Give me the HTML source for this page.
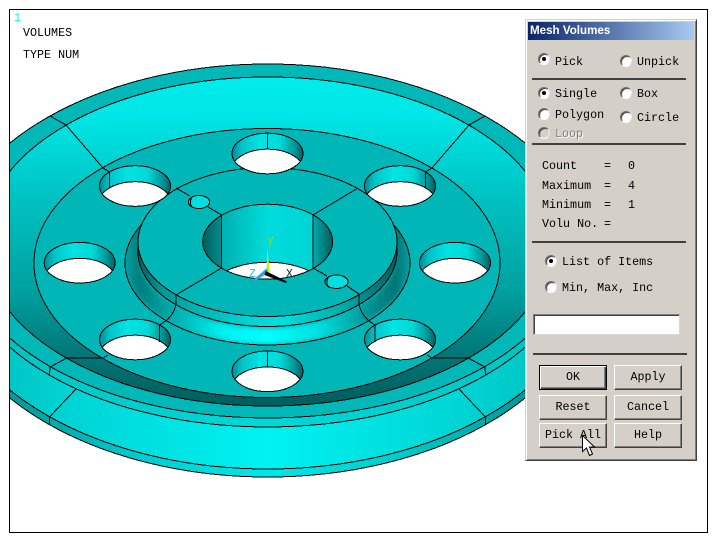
<!DOCTYPE html>
<html><head><meta charset="utf-8">
<style>
html,body{margin:0;padding:0;background:#fff;width:720px;height:546px;overflow:hidden}
#wrap{position:relative;width:720px;height:546px;overflow:hidden;background:#fff}
svg{position:absolute;left:0;top:0}
.t{position:absolute;font:11.7px/14px "Liberation Mono",monospace;color:#000;white-space:pre}
#panel{position:absolute;left:525px;top:19px;width:172px;height:442px;box-sizing:border-box;background:#d4d0c8;border:1px solid;border-color:#d4d0c8 #404040 #404040 #d4d0c8;box-shadow:inset 1px 1px #fff,inset -1px -1px #808080}
#title{position:absolute;left:528px;top:22px;width:166px;height:18px;background:linear-gradient(90deg,#0a246a,#a6caf0);color:#fff;font:bold 11.6px/18px "Liberation Sans",sans-serif;text-indent:2px}
.d{position:absolute;height:2px;background:#404040}
.r{position:absolute;width:12px;height:12px;box-sizing:border-box;border-radius:50%;background:#fff;border:1px solid;border-color:#707070 #e8e8e8 #fff #707070;box-shadow:inset 1px 1px #404040}
.r.s:after{content:"";position:absolute;left:3px;top:3px;width:4px;height:4px;border-radius:50%;background:#000}
.b{position:absolute;box-sizing:border-box;width:68px;height:25px;background:#d4d0c8;border:1px solid;border-color:#fff #404040 #404040 #fff;box-shadow:inset -1px -1px #808080;font:11.7px/23px "Liberation Mono",monospace;text-align:center;color:#000}
.b.k{border:1px solid #000;box-shadow:inset 1px 1px #fff,inset -1px -1px #404040,inset -2px -2px #808080}
#inp{position:absolute;left:533px;top:314px;width:147px;height:21px;box-sizing:border-box;background:#fff;border:1px solid;border-color:#808080 #d8d8d8 #d8d8d8 #808080;box-shadow:inset 1px 1px #404040}
</style></head>
<body><div id="wrap">
<svg width="720" height="546" viewBox="0 0 720 546" shape-rendering="crispEdges">
<defs>
<clipPath id="fr"><rect x="10" y="10" width="697" height="522"/></clipPath>
<clipPath id="backc"><rect x="0" y="0" width="720" height="347"/></clipPath>
<clipPath id="hc"><ellipse cx="0" cy="0" rx="35.5" ry="20.3"/></clipPath>
<clipPath id="bc"><ellipse cx="267.7" cy="241.7" rx="65" ry="37.5"/></clipPath>
<clipPath id="Hc"><ellipse cx="267.5" cy="263" rx="142.5" ry="82"/></clipPath>
<linearGradient id="rim" x1="0" x2="1" y1="0" y2="0"><stop offset="0" stop-color="#007f7f"/><stop offset=".15" stop-color="#00a6a6"/><stop offset=".3" stop-color="#00cccc"/><stop offset=".5" stop-color="#00e8e8"/><stop offset=".7" stop-color="#00cccc"/><stop offset=".85" stop-color="#00a6a6"/><stop offset="1" stop-color="#007f7f"/></linearGradient>
<linearGradient id="cone" x1="0" x2="1" y1="0" y2="0"><stop offset="0" stop-color="#00b8b8"/><stop offset=".2" stop-color="#00d4d4"/><stop offset=".5" stop-color="#00f2f2"/><stop offset=".8" stop-color="#00d4d4"/><stop offset="1" stop-color="#00b8b8"/></linearGradient>
<linearGradient id="strip" x1="0" x2="1" y1="0" y2="0"><stop offset="0" stop-color="#00c0c0"/><stop offset=".5" stop-color="#00d8d8"/><stop offset="1" stop-color="#00c0c0"/></linearGradient>
<linearGradient id="inner" gradientUnits="userSpaceOnUse" x1="0" x2="0" y1="77" y2="406"><stop offset="0" stop-color="#00ecec"/><stop offset=".12" stop-color="#00e6e6"/><stop offset=".35" stop-color="#00c4c4"/><stop offset=".65" stop-color="#00a0a0"/><stop offset=".85" stop-color="#007676"/><stop offset=".96" stop-color="#006262"/><stop offset="1" stop-color="#006060"/></linearGradient>
<linearGradient id="wall" x1="0" x2="1" y1="0" y2="0"><stop offset="0" stop-color="#008a90"/><stop offset=".14" stop-color="#00c4c8"/><stop offset=".4" stop-color="#00e4e4"/><stop offset=".68" stop-color="#00d8d8"/><stop offset=".88" stop-color="#009898"/><stop offset="1" stop-color="#005e5e"/></linearGradient>
<linearGradient id="bw" gradientUnits="userSpaceOnUse" x1="203" x2="333" y1="0" y2="0"><stop offset="0" stop-color="#005e5e"/><stop offset=".14" stop-color="#008c8c"/><stop offset=".145" stop-color="#00b0b0"/><stop offset=".5" stop-color="#00dcdc"/><stop offset=".85" stop-color="#00d4d4"/><stop offset=".855" stop-color="#00a8a8"/><stop offset="1" stop-color="#005c5c"/></linearGradient>
<linearGradient id="boss" gradientUnits="userSpaceOnUse" x1="138" x2="397" y1="0" y2="0"><stop offset="0" stop-color="#005e5e"/><stop offset=".1" stop-color="#009c9c"/><stop offset=".35" stop-color="#00c8c8"/><stop offset=".55" stop-color="#00e0e0"/><stop offset=".8" stop-color="#00a8a8"/><stop offset="1" stop-color="#005e5e"/></linearGradient>
<linearGradient id="fil" gradientUnits="userSpaceOnUse" x1="125" x2="410" y1="0" y2="0"><stop offset="0" stop-color="#00a0a0"/><stop offset=".05" stop-color="#007c7c"/><stop offset=".18" stop-color="#00b0b0"/><stop offset=".34" stop-color="#00f0f0"/><stop offset=".5" stop-color="#00ffff"/><stop offset=".68" stop-color="#00e0e0"/><stop offset=".86" stop-color="#009090"/><stop offset=".95" stop-color="#007474"/><stop offset="1" stop-color="#00a0a0"/></linearGradient>
<filter id="bl" x="-10%" y="-10%" width="120%" height="120%"><feGaussianBlur stdDeviation="2.5"/></filter>
<g id="h">
<ellipse cx="0" cy="0" rx="35.5" ry="20.3" fill="url(#wall)"/>
<g clip-path="url(#hc)"><ellipse cx="0" cy="16" rx="35.5" ry="20.3" fill="#fff" stroke="#000"/></g>
<ellipse cx="0" cy="0" rx="35.5" ry="20.3" fill="none" stroke="#000"/>
</g>
</defs>
<rect x="9.5" y="9.5" width="698" height="523" fill="#fff" stroke="#000"/>
<g clip-path="url(#fr)" stroke="#000" stroke-width="1">
<ellipse cx="267.5" cy="274.5" rx="325" ry="202.5" fill="url(#rim)"/>
<ellipse cx="267.5" cy="266.5" rx="325" ry="202.5" fill="url(#cone)"/>
<g clip-path="url(#backc)"><ellipse cx="267.5" cy="266.5" rx="325" ry="202.5" fill="#00b8b8"/></g>
<ellipse cx="267.5" cy="252" rx="307" ry="175" fill="url(#strip)" stroke="none"/>
<ellipse cx="267.5" cy="243" rx="307" ry="175" fill="#00b8b8" stroke="none"/>
<path d="M-39.5 252A307 175 0 0 0 574.5 252M-39.5 243A307 175 0 0 0 574.5 243" fill="none"/>
<ellipse cx="267.5" cy="241.5" rx="285" ry="164.5" fill="url(#inner)"/>
<ellipse cx="267" cy="263" rx="233" ry="134.5" fill="#00b6b6"/>
<path d="M50 116L66 125L103 168L109.5 172M485 116L469 125L432 168L425.5 172M49.5 417V425M485.5 417V425M49.5 417L76 389M485.5 417L459 389M50 367L49.5 375M485 367L485.5 375M50 367L67 358H103L108 355M485 367L468 358H432L427 355" fill="none"/>
<ellipse cx="267.5" cy="263" rx="142.5" ry="82" fill="#00b6b6"/>
<g clip-path="url(#Hc)"><ellipse cx="267.5" cy="258" rx="136" ry="78" fill="none" stroke="url(#fil)" stroke-width="16" filter="url(#bl)"/></g>
<ellipse cx="267.5" cy="263" rx="142.5" ry="82" fill="none"/>
<ellipse cx="267.5" cy="252" rx="129.5" ry="74.5" fill="url(#boss)"/>
<ellipse cx="267.5" cy="242" rx="129.5" ry="74.5" fill="#00b6b6"/>
<path d="M176 295V304C174 315 167 321 159.5 325M359 295V304C361 315 368 321 375 325" fill="none"/>
<path d="M176 295L221.7 268M359 294L347 286M327 276L313 268M221.7 215L208 207M190 196L176 188M313 215L358 188" fill="none"/>
<ellipse cx="267.7" cy="241.7" rx="65" ry="37.5" fill="url(#bw)"/>
<g clip-path="url(#bc)"><ellipse cx="267.7" cy="299.7" rx="65" ry="37.5" fill="#fff" stroke="#000"/></g>
<ellipse cx="267.7" cy="241.7" rx="65" ry="37.5" fill="none"/>
<path d="M221.7 215V268M313 215V268" fill="none"/>
<use href="#h" x="267.5" y="153.5"/>
<use href="#h" x="135" y="186"/>
<use href="#h" x="400" y="186"/>
<use href="#h" x="79.7" y="262.7"/>
<use href="#h" x="455" y="262.7"/>
<use href="#h" x="135" y="339.5"/>
<use href="#h" x="400" y="339.5"/>
<use href="#h" x="267.5" y="371.3"/>
<path d="M267.5 133.5V149M109.5 172V188M425.5 172V188M159.5 325V342M375 325V342M267.5 351V367" fill="none"/>
<ellipse cx="199" cy="202" rx="10.7" ry="6.5" fill="#00dede"/>
<path d="M192 196.5C190 200 190 204 192 207.5" fill="none"/>
<ellipse cx="336.5" cy="281.7" rx="11.5" ry="6.7" fill="#00dede"/>
<path d="M328.5 276.5C326.5 280 326.5 284 328.5 287.5" fill="none"/>
</g>
<g shape-rendering="auto">
<path d="M267.3 249L269.8 273H266.5Z" fill="#c8f000"/>
<path d="M267 268L253 280L255 281L268 273Z" fill="#2aa8e8"/>
<path d="M265.5 271L287 281.5L286 283L264.5 275Z" fill="#000"/>
<text x="267" y="245" font-family="Liberation Mono,monospace" font-size="11.5" fill="#7ee020">Y</text>
<text x="249" y="277" font-family="Liberation Mono,monospace" font-size="11.5" fill="#38b8f0">Z</text>
<text x="286" y="277" font-family="Liberation Mono,monospace" font-size="11.5" fill="#202040">X</text>
</g>
</svg>
<div class="t" style="left:14px;top:11px;color:#00ffff">1</div>
<div class="t" style="left:23px;top:26px">VOLUMES</div>
<div class="t" style="left:23px;top:48px">TYPE NUM</div>

<div id="panel"></div>
<div id="title">Mesh Volumes</div>

<div class="r s" style="left:538px;top:53px"></div><div class="t" style="left:555px;top:55px">Pick</div>
<div class="r" style="left:620px;top:55px"></div><div class="t" style="left:637px;top:55px">Unpick</div>
<div class="d" style="left:532px;top:78px;width:154px"></div>
<div class="r s" style="left:538px;top:87px"></div><div class="t" style="left:555px;top:87px">Single</div>
<div class="r" style="left:620px;top:87px"></div><div class="t" style="left:637px;top:87px">Box</div>
<div class="r" style="left:538px;top:108px"></div><div class="t" style="left:555px;top:108px">Polygon</div>
<div class="r" style="left:620px;top:111px"></div><div class="t" style="left:637px;top:111px">Circle</div>
<div class="r" style="left:538px;top:127px;background:#d4d0c8"></div><div class="t" style="left:555px;top:127px;color:#808080;text-shadow:1px 1px #fff">Loop</div>
<div class="d" style="left:532px;top:143px;width:154px"></div>

<div class="t" style="left:542px;top:159px">Count</div><div class="t" style="left:604px;top:159px">=</div><div class="t" style="left:628px;top:159px">0</div>
<div class="t" style="left:542px;top:179px">Maximum</div><div class="t" style="left:604px;top:179px">=</div><div class="t" style="left:628px;top:179px">4</div>
<div class="t" style="left:542px;top:198px">Minimum</div><div class="t" style="left:604px;top:198px">=</div><div class="t" style="left:628px;top:198px">1</div>
<div class="t" style="left:542px;top:217px">Volu No.</div><div class="t" style="left:604px;top:217px">=</div>
<div class="d" style="left:532px;top:241px;width:154px"></div>

<div class="r s" style="left:545px;top:255px"></div><div class="t" style="left:562px;top:255px">List of Items</div>
<div class="r" style="left:545px;top:281px"></div><div class="t" style="left:562px;top:281px">Min, Max, Inc</div>
<div id="inp"></div>
<div class="d" style="left:533px;top:353px;width:154px"></div>

<div class="b k" style="left:539px;top:365px">OK</div>
<div class="b" style="left:614px;top:365px">Apply</div>
<div class="b" style="left:539px;top:395px">Reset</div>
<div class="b" style="left:614px;top:395px">Cancel</div>
<div class="b" style="left:539px;top:423px">Pick All</div>
<div class="b" style="left:614px;top:423px">Help</div>

<svg width="720" height="546" viewBox="0 0 720 546" style="pointer-events:none">
<path d="M582.5 435.5V451.5L586.5 448L589.5 455.5L592.5 454L589.5 447H594.5Z" fill="#fff" stroke="#000" stroke-width="1"/>
</svg>
</div></body></html>
